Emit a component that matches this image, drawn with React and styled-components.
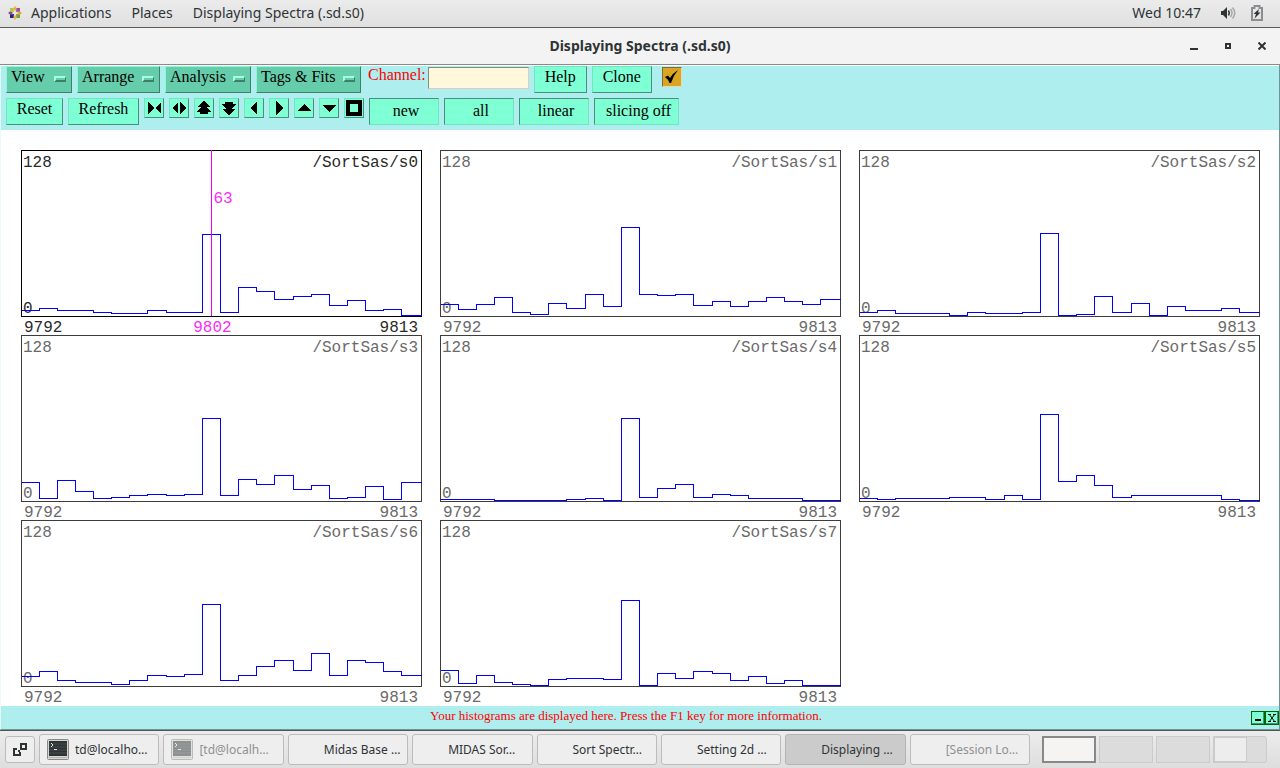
import React from 'react'
import styled, { createGlobalStyle, css } from 'styled-components'

const menus = ['View', 'Arrange', 'Analysis', 'Tags & Fits']
const menuWidths = [66, 83, 86, 105]

const first = 9792
const last = 9813

const spectra = [
    { name: '/SortSas/s0', active: true, cursor: { channel: 9802, count: 63 }, bins: [6, 8, 6, 6, 4, 3, 3, 6, 4, 4, 82, 4, 29, 25, 17, 20, 22, 11, 16, 6, 7, 1] },
    { name: '/SortSas/s1', bins: [12, 7, 12, 19, 4, 2, 13, 8, 22, 10, 89, 22, 21, 22, 11, 15, 10, 15, 19, 15, 12, 17] },
    { name: '/SortSas/s2', bins: [4, 6, 3, 3, 3, 1, 4, 3, 3, 4, 83, 1, 2, 20, 4, 13, 1, 10, 6, 6, 8, 4] },
    { name: '/SortSas/s3', bins: [19, 3, 21, 10, 3, 4, 6, 7, 6, 7, 83, 6, 22, 17, 26, 12, 16, 3, 4, 15, 2, 19] },
    { name: '/SortSas/s4', bins: [2, 2, 2, 1, 1, 1, 1, 2, 3, 1, 83, 4, 13, 17, 4, 7, 6, 3, 3, 3, 1, 1] },
    { name: '/SortSas/s5', bins: [3, 2, 3, 3, 3, 4, 4, 2, 6, 2, 87, 20, 26, 16, 4, 6, 6, 6, 6, 6, 2, 1] },
    { name: '/SortSas/s6', bins: [10, 15, 6, 4, 4, 2, 6, 11, 10, 12, 82, 6, 11, 20, 26, 16, 33, 11, 26, 24, 15, 11] },
    { name: '/SortSas/s7', bins: [16, 3, 11, 4, 2, 1, 7, 8, 8, 7, 86, 1, 13, 8, 15, 13, 6, 10, 3, 6, 1, 1] },
]

const arrows = [
    { label: 'Contract', d: 'M3 3v12l6-6zM16 3v12l-6-6z' },
    { label: 'Expand', d: 'M8 3v12L2 9zM10 3v12l6-6z' },
    { label: 'Double scale', d: 'M9 2l7 6h-4l4 5h-3v2H5v-2H2l4-5H2z' },
    { label: 'Halve scale', d: 'M9 16l7-6h-4l4-5h-3V3H5v2H2l4 5H2z' },
    { label: 'Left', d: 'M12 2v14L5 9z' },
    { label: 'Right', d: 'M6 2v14l7-7z' },
    { label: 'Up', d: 'M2 12h14L9 5z' },
    { label: 'Down', d: 'M2 6h14l-7 7z' },
    { label: 'Full view', d: 'M1 1h16v16H1zM5 5v8h8V5z' },
]

const toggles = [
    { label: 'new', width: 70 },
    { label: 'all', width: 70 },
    { label: 'linear', width: 70 },
    { label: 'slicing off', width: 85 },
]

const tasks = [
    { label: 'td@localho…', terminal: true },
    { label: '[td@localh…', terminal: true, minimized: true },
    { label: 'Midas Base …' },
    { label: 'MIDAS Sor…' },
    { label: 'Sort Spectr…' },
    { label: 'Setting 2d …' },
    { label: 'Displaying …', active: true },
    { label: '[Session Lo…', minimized: true },
]

const tracePath = (bins) => {
    const edge = (i) => (i === bins.length ? 400 : Math.floor((i * 399) / bins.length)) + 0.5
    return bins.map((h, i) => `${i ? 'L' : 'M'}${edge(i)} ${166.5 - h}H${edge(i + 1)}`).join('')
}

const Spectrum = ({ name, active, cursor, bins }) => {
    const x = cursor ? ((cursor.channel - first + 0.5) / bins.length) * 100 : 0

    return (
        <Figure $active={active}>
            <Frame>
                <Label $top>128</Label>
                <Label $top $right>{name}</Label>
                <Label>0</Label>
                <Trace viewBox="0 0 401 167" preserveAspectRatio="none" shapeRendering="crispEdges">
                    <rect x="0.5" y="0.5" width="400" height="166" stroke={active ? '#000' : '#3c3c3c'} />
                    <path d={tracePath(bins)} stroke="#0000ff" />
                    {cursor && <path d="M190.5 0V166" stroke="#ee00ee" />}
                </Trace>
                {cursor && <CursorCount style={{ left: `${x}%` }}>{cursor.count}</CursorCount>}
            </Frame>
            <Axis>
                <span>{first}</span>
                {cursor && <CursorChannel style={{ left: `${x}%` }}>{cursor.channel}</CursorChannel>}
                <span>{last}</span>
            </Axis>
        </Figure>
    )
}

const TerminalIcon = () => (
    <svg width="22" height="21" viewBox="0 0 22 21">
        <rect x="0.5" y="0.5" width="21" height="20" rx="1" fill="#d3d7cf" stroke="#888a85" />
        <rect x="2" y="2" width="18" height="15" fill="#2e3436" />
        <path d="M2 5h18M2 8h18M2 11h18M2 14h18" stroke="#454d4b" />
        <path d="M4 4l2 2-2 2M7 10.5h3" fill="none" stroke="#e4e8e2" />
        <path d="M2 18.5h18" stroke="#b4b7b1" />
    </svg>
)

const DistroLogo = () => (
    <svg width="14" height="14" viewBox="0 0 14 14">
        <path d="M7 0l2 2.500L7 5 5 2.500z" fill="#e8b53a" />
        <path d="M14 7l-2.500 2L9 7l2.500-2z" fill="#efa724" />
        <path d="M7 14l-2-2.500L7 9l2 2.500z" fill="#e9b64a" />
        <path d="M0 7l2.500-2L5 7 2.500 9z" fill="#9c3f92" />
        <path d="M2 2h3.500L6 6 2 5.500z" fill="#b5c646" />
        <path d="M8.500 2H12v3.500L8 6z" fill="#a14f9b" />
        <path d="M2 8.500L6 8l-.5 4H2z" fill="#262577" />
        <path d="M8 8l4 .5V12H8.500z" fill="#7c9f3d" />
    </svg>
)

const App = () => (
    <>
        <GlobalStyle />
        <Desktop>
            <TopBar>
                <DistroLogo />
                <TopLink href="#applications">Applications</TopLink>
                <TopLink href="#places">Places</TopLink>
                <TopLink href="#window">Displaying Spectra (.sd.s0)</TopLink>
                <Clock>Wed 10:47</Clock>
                <Tray>
                    <svg width="17" height="14" viewBox="0 0 17 14">
                        <path d="M1 5h2l4-4v12L3 9H1z" fill="#2e3436" />
                        <path d="M8.500 4.500q1.500 2.500 0 5" fill="none" stroke="#2e3436" strokeWidth="1.500" />
                        <path d="M10.500 3q3 4 0 8M12.500 1.500q4.500 5.500 0 11" fill="none" stroke="#a6a8a8" strokeWidth="1.500" />
                    </svg>
                    <svg width="12" height="16" viewBox="0 0 12 16">
                        <path d="M3.500 3V1h5v2H11v12H1V3z" fill="none" stroke="#8b8e8f" strokeWidth="2" />
                        <path d="M8 4L2.500 9H5l-1.500 4.500 6-6H7z" fill="#2e3436" />
                    </svg>
                </Tray>
            </TopBar>
            <TitleBar>
                <Title>Displaying Spectra (.sd.s0)</Title>
                <WindowButtons>
                    <WindowButton aria-label="Minimize">
                        <svg width="8" height="8"><path d="M0 6h8v2H0z" /></svg>
                    </WindowButton>
                    <WindowButton aria-label="Restore">
                        <svg width="8" height="8"><path fillRule="evenodd" d="M1 1h6v6H1zM3 3v2h2V3z" /></svg>
                    </WindowButton>
                    <WindowButton aria-label="Close">
                        <svg width="8" height="8"><path d="M0.500 0.500l7 7M7.500 0.500l-7 7" stroke="#2e3436" strokeWidth="2" /></svg>
                    </WindowButton>
                </WindowButtons>
            </TitleBar>
            <Window>
                <Toolbar>
                    <Row>
                        {menus.map((menu, i) => (
                            <MenuButton key={menu} $width={menuWidths[i]} aria-haspopup="menu">
                                {menu}
                                <Indicator />
                            </MenuButton>
                        ))}
                        <ChannelLabel>
                            Channel:
                            <ChannelInput type="text" />
                        </ChannelLabel>
                        <PushButton $width={53}>Help</PushButton>
                        <PushButton $width={60}>Clone</PushButton>
                        <TickBox>
                            <input type="checkbox" defaultChecked aria-label="Auto update" />
                            <svg width="16" height="16" viewBox="0 0 16 16">
                                <path d="M1 8l3-1.500L6 9Q9 4 14 1 9 7 7 14H5.500Q4 10 1 8z" />
                            </svg>
                        </TickBox>
                    </Row>
                    <Row>
                        <PushButton $width={57}>Reset</PushButton>
                        <PushButton $width={71}>Refresh</PushButton>
                        {arrows.map(({ label, d }) => (
                            <ArrowButton key={label} aria-label={label}>
                                <svg width="18" height="18" viewBox="0 0 18 18" shapeRendering="crispEdges">
                                    <path fillRule="evenodd" d={d} />
                                </svg>
                            </ArrowButton>
                        ))}
                        {toggles.map(({ label, width }) => (
                            <ToggleButton key={label} $width={width}>{label}</ToggleButton>
                        ))}
                    </Row>
                </Toolbar>
                <Canvas>
                    {spectra.map((spectrum) => (
                        <Spectrum key={spectrum.name} {...spectrum} />
                    ))}
                </Canvas>
                <Status>
                    <Message>Your histograms are displayed here. Press the F1 key for more information.</Message>
                    <SmallButton aria-label="Collapse">
                        <svg width="10" height="10" shapeRendering="crispEdges"><path d="M2 6h6v2H2z" /></svg>
                    </SmallButton>
                    <SmallButton aria-label="Dismiss">
                        <svg width="10" height="10"><path d="M1 1.500h3M6 1.500h3M1 8.500h3M6 8.500h3M2 1l6 8M8 1L2 9" stroke="#000" /></svg>
                    </SmallButton>
                </Status>
            </Window>
            <TaskBar>
                <DesktopButton aria-label="Show desktop">
                    <svg width="15" height="15" viewBox="0 0 15 15">
                        <path d="M4 7H1v6h6v-3M8 2h5v5H8z" fill="none" stroke="#2e3436" strokeWidth="2" />
                        <path d="M5 8h2v2H5z" fill="#2e3436" />
                    </svg>
                </DesktopButton>
                <Tasks>
                    {tasks.map(({ label, terminal, minimized, active }) => (
                        <Task key={label} $active={active} $minimized={minimized}>
                            <TaskIcon>{terminal && <TerminalIcon />}</TaskIcon>
                            {label}
                        </Task>
                    ))}
                </Tasks>
                <Workspaces>
                    <Workspace $current aria-label="Workspace 1" />
                    <Workspace aria-label="Workspace 2" />
                    <Workspace aria-label="Workspace 3" />
                    <Workspace aria-label="Workspace 4"><MiniWindow /></Workspace>
                </Workspaces>
            </TaskBar>
        </Desktop>
    </>
)

const GlobalStyle = createGlobalStyle`
    * {
        box-sizing: border-box;
    }

    body {
        margin: 0;
        color: #2e3436;
        font: 14px/20px "Noto Sans", "Open Sans", sans-serif;
    }

    button, input {
        margin: 0;
        padding: 0;
        font: inherit;
        color: inherit;
    }

    svg {
        display: block;
        flex: none;
    }
`

const raised = css`
    border: 1px solid;
    border-color: #6fe6bf #4a8f7b #4a8f7b #6fe6bf;
`

const sunken = css`
    border: 1px solid;
    border-color: #4a8f7b #6fe6bf #6fe6bf #4a8f7b;
`

const Desktop = styled.div`
    min-height: 100vh;
    display: flex;
    flex-direction: column;
`

const TopBar = styled.header`
    height: 28px;
    padding: 0 17px 2px 8px;
    display: flex;
    align-items: center;
    background: linear-gradient(#ebebeb, #e0e0e0);
    border-bottom: 1px solid #5c5c5c;
`

const TopLink = styled.a`
    margin: 0 11px 0 9px;
    color: inherit;
    text-decoration: none;
`

const Clock = styled.time`
    margin-left: auto;
`

const Tray = styled.div`
    margin-left: 19px;
    display: flex;
    align-items: center;
    gap: 14px;
`

const TitleBar = styled.div`
    height: 37px;
    padding: 0 14px;
    display: grid;
    grid-template-columns: 1fr auto 1fr;
    align-items: center;
    background: #f3f3f3;
    border-bottom: 1px solid #8c8a84;
`

const Title = styled.h1`
    grid-column: 2;
    margin: 0;
    font-size: 14px;
    line-height: 20px;
    font-weight: 700;
`

const WindowButtons = styled.div`
    display: flex;
    justify-content: flex-end;
    gap: 26px;
`

const WindowButton = styled.button`
    background: none;
    border: 0;

    svg {
        fill: #2e3436;
    }
`

const Window = styled.main`
    flex: 1;
    display: flex;
    flex-direction: column;
    border: solid #6f9494;
    border-width: 0 1px 1px 1px;
    border-left-color: #e6fbfb;
    font-family: "Liberation Serif", serif;
    font-size: 16px;
    line-height: 18px;
    color: #000;
`

const Toolbar = styled.div`
    padding: 0 5px 5px;
    display: flex;
    flex-direction: column;
    gap: 5px;
    background: #afeeee;
    border-top: 1px solid #f4ffff;
`

const Row = styled.div`
    height: 27px;
    display: flex;
    align-items: flex-start;
    gap: 5px;
`

const PushButton = styled.button`
    width: ${({ $width }) => $width}px;
    height: 27px;
    padding-bottom: 5px;
    background: #7fffd4;
    ${raised}
`

const MenuButton = styled(PushButton)`
    padding: 0 5px 5px 4px;
    display: flex;
    justify-content: space-between;
    align-items: center;
    background: #66cdaa;
    border-color: #8ff5d8 #3f7f6a #3f7f6a #8ff5d8;
`

const ToggleButton = styled(PushButton)`
    padding: 0 0 2px 4px;
    ${sunken}
`

const Indicator = styled.span`
    width: 12px;
    height: 6px;
    margin-top: 4px;
    background: #66cdaa;
    border: solid;
    border-width: 2px 1px 2px 2px;
    border-color: #a8ffe6 #3f7f6a #3f7f6a #a8ffe6;
`

const ArrowButton = styled.button`
    width: 20px;
    height: 20px;
    background: #7fffd4;
    ${raised}
`

const ChannelLabel = styled.label`
    padding-left: 2px;
    display: flex;
    gap: 2px;
    color: #f00;
`

const ChannelInput = styled.input`
    width: 101px;
    height: 22px;
    margin-top: 1px;
    color: #000;
    background: #fff8dc;
    border: 1px solid;
    border-color: #8a8a7c #d8cfc0 #d8cfc0 #8a8a7c;
`

const TickBox = styled.label`
    width: 20px;
    height: 20px;
    margin: 1px 0 0 5px;
    display: grid;
    place-items: center;

    input, svg {
        grid-area: 1 / 1;
    }

    input {
        appearance: none;
        width: 20px;
        height: 20px;
        background: #daa520;
        border: 1px solid;
        border-color: #806b3a #e8d9b0 #e8d9b0 #806b3a;
    }

    svg {
        pointer-events: none;
    }

    input:not(:checked) + svg {
        display: none;
    }
`

const Canvas = styled.section`
    flex: 1;
    padding: 20px 19px 0 20px;
    display: grid;
    grid-template-columns: repeat(3, 1fr);
    align-content: start;
    column-gap: 18px;
    background: #fff;
`

const Figure = styled.figure`
    margin: 0;
    font: 16px/18px "Liberation Mono", monospace;
    color: ${({ $active }) => ($active ? '#2a2a2a' : '#6a6a6a')};
`

const Frame = styled.div`
    position: relative;
    height: 167px;
`

const Trace = styled.svg`
    position: relative;
    width: 100%;
    height: 167px;
    fill: none;
`

const Label = styled.span`
    position: absolute;
    ${({ $top }) => ($top ? 'top: 4px;' : 'bottom: -1px;')}
    ${({ $right }) => ($right ? 'right: 4px;' : 'left: 2px;')}
`

const CursorCount = styled.span`
    position: absolute;
    top: 40px;
    padding-left: 1px;
    color: #f530f5;
`

const Axis = styled.figcaption`
    position: relative;
    height: 18px;
    padding: 2px 4px 0 3px;
    display: flex;
    justify-content: space-between;
`

const CursorChannel = styled.span`
    position: absolute;
    transform: translateX(-50%);
    color: #f530f5;
`

const Status = styled.footer`
    height: 23px;
    display: flex;
    align-items: center;
    background: #afeeee;
`

const Message = styled.p`
    flex: 1;
    margin: 0;
    padding-bottom: 3px;
    text-align: center;
    font-size: 13px;
    color: #f00;
`

const SmallButton = styled.button`
    width: 14px;
    height: 14px;
    display: grid;
    place-items: center;
    background: #7fffd4;
    border: 1px solid #006400;
    box-shadow: inset -1px -1px #4a8f7b;
`

const TaskBar = styled.nav`
    height: 38px;
    padding: 0 13px 0 5px;
    display: flex;
    align-items: center;
    gap: 4px;
    background: linear-gradient(#ececec, #dedede);
    border-top: 1px solid #555;
`

const DesktopButton = styled.button`
    width: 30px;
    height: 27px;
    display: grid;
    place-items: center;
    background: #eee;
    border: 1px solid #bcbcbc;
    border-radius: 3px;
`

const Tasks = styled.div`
    flex: 1;
    display: grid;
    grid-template-columns: repeat(8, 1fr);
    gap: 4px;
`

const Task = styled.button`
    height: 31px;
    padding: 0 0 0 7px;
    display: flex;
    align-items: center;
    gap: 6px;
    font-size: 12px;
    white-space: nowrap;
    color: ${({ $minimized }) => ($minimized ? '#8e9191' : '#2e3436')};
    background: ${({ $active }) => ($active ? '#cbcbcb' : '#eee')};
    border: 1px solid ${({ $active }) => ($active ? '#b4b4b4' : '#bcbcbc')};
    border-radius: 3px;

    svg {
        opacity: ${({ $minimized }) => ($minimized ? 0.5 : 1)};
    }
`

const TaskIcon = styled.span`
    width: 22px;
    flex: none;
`

const Workspaces = styled.div`
    margin-left: 8px;
    display: flex;
    gap: 3px;
`

const Workspace = styled.button`
    width: 54px;
    height: 27px;
    display: flex;
    background: ${({ $current }) => ($current ? '#f5f4f2' : '#dcdcdc')};
    border: ${({ $current }) => ($current ? '2px solid #888' : '1px solid #cbcbcb')};

    &:last-child {
        border-radius: 0 3px 3px 0;
    }
`

const MiniWindow = styled.span`
    width: 33px;
    height: 25px;
    background: #ededed;
    border: 1px solid #cbcbcb;
`

export default App
